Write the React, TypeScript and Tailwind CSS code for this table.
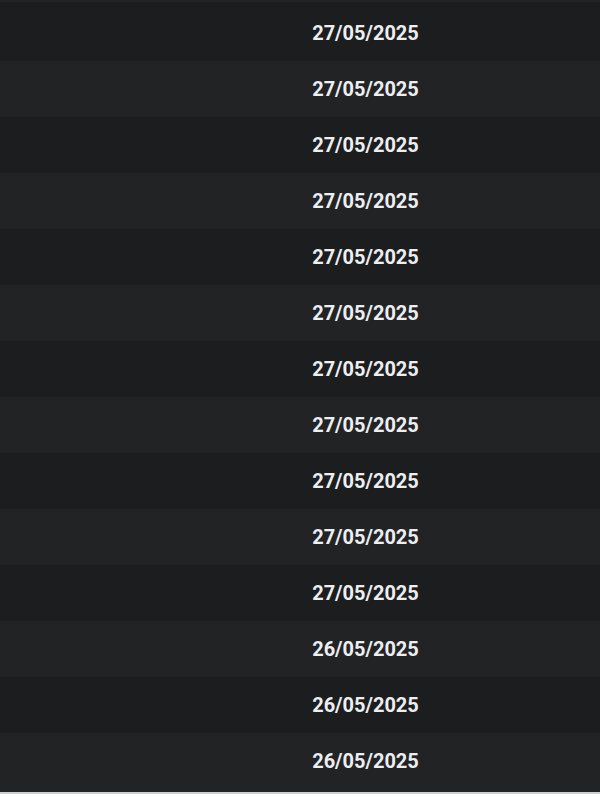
import React from "react";

const dates = [
  "27/05/2025","27/05/2025","27/05/2025","27/05/2025","27/05/2025","27/05/2025",
  "27/05/2025","27/05/2025","27/05/2025","27/05/2025","27/05/2025",
  "26/05/2025","26/05/2025","26/05/2025",
];

export default function App() {
  return (
    <div className="w-[600px] h-[800px] bg-white" style={{ fontFamily: "Roboto, 'Noto Sans', sans-serif" }}>
      <div className="bg-[#1c1d1f]">
        <div className="h-[2px] bg-[#232427]" />
        <div className="h-[3px]" />
        {dates.map((d, i) => (
          <div key={i} className={`flex h-[56px] items-center ${i % 2 === 0 ? "bg-[#1c1d1f]" : "bg-[#222325]"}`}>
            <div className="w-[281px] shrink-0" />
            <div className="w-[169px] shrink-0 text-center text-[20px] font-bold leading-none text-[#eceef0]">{d}</div>
          </div>
        ))}
        <div className="h-[3px] bg-[#222325]" />
      </div>
      <div className="h-[2px] bg-[#cfcfcf]" />
    </div>
  );
}
